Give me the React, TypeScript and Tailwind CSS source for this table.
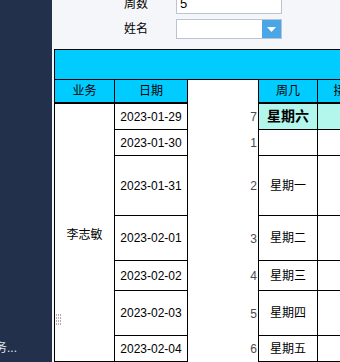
import React from 'react';

const rows = [
  { date: '2023-01-29', num: '7', day: '星期六', h: 'h-[26px]', hl: true },
  { date: '2023-01-30', num: '1', day: '', h: 'h-[26px]' },
  { date: '2023-01-31', num: '2', day: '星期一', h: 'h-[60px]' },
  { date: '2023-02-01', num: '3', day: '星期二', h: 'h-[45px]' },
  { date: '2023-02-02', num: '4', day: '星期三', h: 'h-[30px]' },
  { date: '2023-02-03', num: '5', day: '星期四', h: 'h-[45px]' },
  { date: '2023-02-04', num: '6', day: '星期五', h: 'h-[26px]' },
];

export default function App() {
  return (
    <div className="w-[340px] h-[362px] overflow-hidden flex font-['Liberation_Sans','Noto_Sans_CJK_SC',sans-serif] text-[12px] text-black">
      {/* Sidebar */}
      <div className="w-[52px] shrink-0 bg-[#22304b] flex flex-col justify-end pb-[7px] overflow-hidden">
        <div className="whitespace-nowrap -ml-[17px] text-[#dfe6f0] leading-[14px]">业务...</div>
      </div>

      {/* Main */}
      <div className="flex-1 min-w-0 bg-[#f5f6f9] flex flex-col overflow-hidden">
        {/* Filter form */}
        <div className="h-[49px] shrink-0">
          <div className="-mt-[6px] pl-[72px] flex flex-col gap-[5px]">
            <div className="flex items-center h-[20px]">
              <span className="w-[52px] leading-[20px]">周数</span>
              <div className="w-[106px] h-[20px] border border-[#bcc3d5] bg-white pl-[3px] leading-[18px] text-[13px]">5</div>
            </div>
            <div className="flex items-center h-[20px]">
              <span className="w-[52px] leading-[20px]">姓名</span>
              <div className="w-[106px] h-[20px] border border-[#bcc3d5] bg-white flex">
                <div className="flex-1" />
                <div className="w-[19px] bg-[#4ba6e8] flex items-center justify-center">
                  <svg width="9" height="5" viewBox="0 0 9 5">
                    <path d="M0 0 L9 0 L4.5 5 Z" fill="#ffffff" />
                  </svg>
                </div>
              </div>
            </div>
          </div>
        </div>

        {/* Table */}
        <div className="ml-[2px] w-max border-l border-t border-black bg-white">
          <div className="h-[30px] bg-[#00ccff] border-b border-black" />
          <div className="flex">
            {/* 业务 column */}
            <div className="w-[60px] flex flex-col">
              <div className="h-[24px] bg-[#00ccff] border-r border-b-2 border-black flex items-center justify-center">业务</div>
              <div className="relative h-[258px] border-r border-b border-black flex items-center justify-center pt-[4px]">
                李志敏
                <svg className="absolute left-[1px] top-[210px]" width="5" height="12" viewBox="0 0 5 12">
                  {[0, 3, 6, 9].map((y) => (
                    <g key={y}>
                      <rect x="0" y={y} width="1" height="2" fill="#d9a0b8" />
                      <rect x="2" y={y} width="1" height="2" fill="#a7b4e0" />
                      <rect x="4" y={y} width="1" height="2" fill="#c8a890" />
                    </g>
                  ))}
                </svg>
              </div>
            </div>

            {/* 日期 column */}
            <div className="w-[73px] flex flex-col">
              <div className="h-[24px] bg-[#00ccff] border-r border-b-2 border-black flex items-center justify-center">日期</div>
              {rows.map((r) => (
                <div key={r.date} className={`${r.h} border-r border-b border-black flex items-center justify-center`}>
                  {r.date}
                </div>
              ))}
            </div>

            {/* index column */}
            <div className="w-[71px] flex flex-col">
              <div className="h-[24px] border-r border-black" />
              {rows.map((r) => (
                <div key={r.date} className={`${r.h} border-r border-black flex items-center justify-end pr-[1px] text-[#4b4b4b]`}>
                  {r.num}
                </div>
              ))}
            </div>

            {/* 周几 column */}
            <div className="w-[59px] flex flex-col">
              <div className="h-[24px] bg-[#00ccff] border-r border-b-2 border-black flex items-center justify-center">周几</div>
              {rows.map((r) => (
                <div
                  key={r.date}
                  className={`${r.h} border-r border-b border-black flex items-center justify-center ${
                    r.hl ? 'bg-[#b3f6ec] font-bold text-[14px]' : ''
                  }`}
                >
                  {r.day}
                </div>
              ))}
            </div>

            {/* next column */}
            <div className="w-[56px] flex flex-col">
              <div className="h-[24px] bg-[#00ccff] border-r border-b-2 border-black flex items-center justify-center">接待</div>
              {rows.map((r) => (
                <div key={r.date} className={`${r.h} border-r border-b border-black ${r.hl ? 'bg-[#b3f6ec]' : ''}`} />
              ))}
            </div>
          </div>
        </div>
      </div>
    </div>
  );
}
